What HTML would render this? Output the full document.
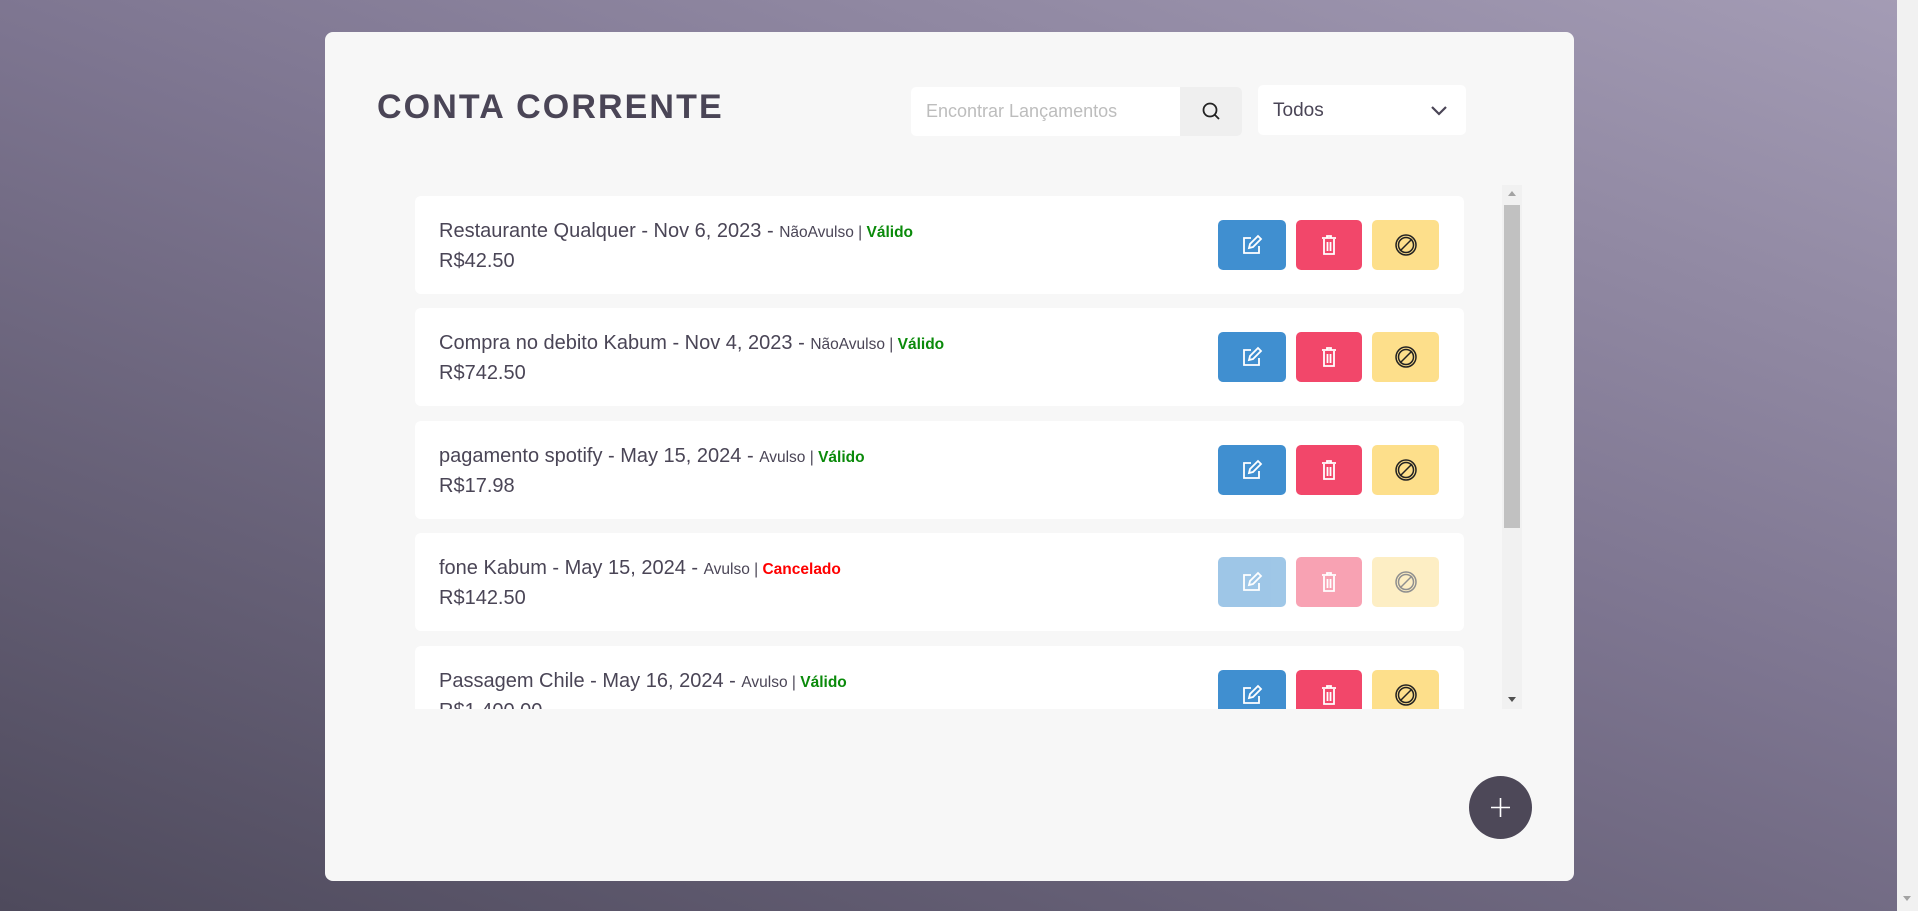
<!DOCTYPE html>
<html><head><meta charset="utf-8"><style>
*{box-sizing:border-box;margin:0;padding:0}
html,body{width:1918px;height:911px;overflow:hidden}
body{background:linear-gradient(200deg,#a49cb5 0%,#7d7590 45%,#4e4a5c 100%);font-family:"Liberation Sans",sans-serif;position:relative}
.sb{position:absolute;right:0;top:0;width:21px;height:911px;background:#f1f1f1}
.sb:after{content:"";position:absolute;left:6px;bottom:6px;border:4px solid transparent;border-top:5px solid #a3a3a3}
.panel{position:absolute;left:325px;top:32px;width:1249px;height:849px;background:#f7f7f7;border-radius:8px}
h1{position:absolute;left:52px;top:56px;font-size:34px;font-weight:bold;letter-spacing:2.1px;color:#4a4556}
.search{position:absolute;left:586px;top:55px;width:331px;height:49px;background:#fff;border-radius:5px;overflow:hidden}
.search span{position:absolute;left:15px;top:14px;font-size:18px;color:#bdbdbd}
.search .btn{position:absolute;right:0;top:0;width:62px;height:49px;background:#efefef}
.sel{position:absolute;left:933px;top:53px;width:208px;height:50px;background:#fff;border-radius:5px}
.sel span{position:absolute;left:15px;top:15px;font-size:19px;color:#4a4556}
.list{position:absolute;left:90px;top:153px;width:1107px;height:524px;overflow:hidden}
.card{position:absolute;left:0;width:1049px;height:98px;background:#fff;border-radius:6px}
.t1{position:absolute;left:24px;top:24px;font-size:20px;color:#4a4556;white-space:nowrap}
.t1 small{font-size:15.5px}
.v{color:#0a8a0a;font-weight:bold;font-size:15.5px}
.c{color:#ff0000;font-weight:bold;font-size:15.5px}
.t2{position:absolute;left:24px;top:54px;font-size:20px;color:#4a4556}
.b{position:absolute;top:24px;height:50px;border-radius:5px;display:flex;align-items:center;justify-content:center}
.b1{left:803px;width:68px;background:#408fd0}
.b2{left:881px;width:66px;background:#f2476a}
.b3{left:957px;width:67px;background:#fddf8b}
.dis .b{opacity:.5}
.track{position:absolute;left:1087px;top:0;width:20px;height:524px;background:#f1f1f1}
.thumb{position:absolute;left:1089px;top:20px;width:16px;height:323px;background:#c1c1c1}
.ua{position:absolute;left:1093px;top:6px;border:4px solid transparent;border-bottom:5px solid #a3a3a3;border-top:0}
.da{position:absolute;left:1093px;top:512px;border:4px solid transparent;border-top:5px solid #505050;border-bottom:0}
.fab{position:absolute;left:1144px;top:744px;width:63px;height:63px;border-radius:50%;background:#4d4858}
</style></head><body>
<div class="sb"></div>
<div class="panel">
<h1>CONTA CORRENTE</h1>
<div class="search"><span>Encontrar Lançamentos</span><div class="btn"><svg width="62" height="49" viewBox="0 0 62 49"><circle cx="30" cy="23" r="6.5" fill="none" stroke="#222" stroke-width="1.8"/><path d="M35 28l4 4" stroke="#222" stroke-width="1.8"/></svg></div></div>
<div class="sel"><span>Todos</span><svg style="position:absolute;left:172px;top:18px" width="18" height="14" viewBox="0 0 18 14"><path d="M2 4l7 7 7-7" fill="none" stroke="#4a4556" stroke-width="2.2"/></svg></div>
<div class="list">
<div class="card" style="top:11px"><div class="t1">Restaurante Qualquer - Nov 6, 2023 - <small>NãoAvulso | </small><span class="v">Válido</span></div><div class="t2">R$42.50</div>
<div class="b b1"><svg width="22" height="22" viewBox="0 0 22 22" fill="none" stroke="#fff" stroke-width="1.8"><path d="M10 4H3v15h15v-7"/><path d="M8 14l1-4 8-8 3 3-8 8z"/></svg></div><div class="b b2"><svg width="20" height="22" viewBox="0 0 20 22" fill="none" stroke="#fff" stroke-width="1.8"><path d="M3 4h14M8 4V2h4v2M5 5v15h10V5M8.5 8v9M11.5 8v9"/></svg></div><div class="b b3"><svg width="24" height="24" viewBox="0 0 24 24" fill="none" stroke="#222" stroke-width="1.5"><circle cx="12" cy="12" r="10"/><circle cx="12" cy="12" r="7.5"/><path d="M6 18L18 6"/></svg></div></div>
<div class="card" style="top:123px"><div class="t1">Compra no debito Kabum - Nov 4, 2023 - <small>NãoAvulso | </small><span class="v">Válido</span></div><div class="t2">R$742.50</div>
<div class="b b1"><svg width="22" height="22" viewBox="0 0 22 22" fill="none" stroke="#fff" stroke-width="1.8"><path d="M10 4H3v15h15v-7"/><path d="M8 14l1-4 8-8 3 3-8 8z"/></svg></div><div class="b b2"><svg width="20" height="22" viewBox="0 0 20 22" fill="none" stroke="#fff" stroke-width="1.8"><path d="M3 4h14M8 4V2h4v2M5 5v15h10V5M8.5 8v9M11.5 8v9"/></svg></div><div class="b b3"><svg width="24" height="24" viewBox="0 0 24 24" fill="none" stroke="#222" stroke-width="1.5"><circle cx="12" cy="12" r="10"/><circle cx="12" cy="12" r="7.5"/><path d="M6 18L18 6"/></svg></div></div>
<div class="card" style="top:236px"><div class="t1">pagamento spotify - May 15, 2024 - <small>Avulso | </small><span class="v">Válido</span></div><div class="t2">R$17.98</div>
<div class="b b1"><svg width="22" height="22" viewBox="0 0 22 22" fill="none" stroke="#fff" stroke-width="1.8"><path d="M10 4H3v15h15v-7"/><path d="M8 14l1-4 8-8 3 3-8 8z"/></svg></div><div class="b b2"><svg width="20" height="22" viewBox="0 0 20 22" fill="none" stroke="#fff" stroke-width="1.8"><path d="M3 4h14M8 4V2h4v2M5 5v15h10V5M8.5 8v9M11.5 8v9"/></svg></div><div class="b b3"><svg width="24" height="24" viewBox="0 0 24 24" fill="none" stroke="#222" stroke-width="1.5"><circle cx="12" cy="12" r="10"/><circle cx="12" cy="12" r="7.5"/><path d="M6 18L18 6"/></svg></div></div>
<div class="card dis" style="top:348px"><div class="t1">fone Kabum - May 15, 2024 - <small>Avulso | </small><span class="c">Cancelado</span></div><div class="t2">R$142.50</div>
<div class="b b1"><svg width="22" height="22" viewBox="0 0 22 22" fill="none" stroke="#fff" stroke-width="1.8"><path d="M10 4H3v15h15v-7"/><path d="M8 14l1-4 8-8 3 3-8 8z"/></svg></div><div class="b b2"><svg width="20" height="22" viewBox="0 0 20 22" fill="none" stroke="#fff" stroke-width="1.8"><path d="M3 4h14M8 4V2h4v2M5 5v15h10V5M8.5 8v9M11.5 8v9"/></svg></div><div class="b b3"><svg width="24" height="24" viewBox="0 0 24 24" fill="none" stroke="#222" stroke-width="1.5"><circle cx="12" cy="12" r="10"/><circle cx="12" cy="12" r="7.5"/><path d="M6 18L18 6"/></svg></div></div>
<div class="card" style="top:461px"><div class="t1">Passagem Chile - May 16, 2024 - <small>Avulso | </small><span class="v">Válido</span></div><div class="t2">R$1,400.00</div>
<div class="b b1"><svg width="22" height="22" viewBox="0 0 22 22" fill="none" stroke="#fff" stroke-width="1.8"><path d="M10 4H3v15h15v-7"/><path d="M8 14l1-4 8-8 3 3-8 8z"/></svg></div><div class="b b2"><svg width="20" height="22" viewBox="0 0 20 22" fill="none" stroke="#fff" stroke-width="1.8"><path d="M3 4h14M8 4V2h4v2M5 5v15h10V5M8.5 8v9M11.5 8v9"/></svg></div><div class="b b3"><svg width="24" height="24" viewBox="0 0 24 24" fill="none" stroke="#222" stroke-width="1.5"><circle cx="12" cy="12" r="10"/><circle cx="12" cy="12" r="7.5"/><path d="M6 18L18 6"/></svg></div></div>
<div class="track"></div><div class="thumb"></div><div class="ua"></div><div class="da"></div>
</div>
<div class="fab"><svg width="63" height="63" viewBox="0 0 63 63"><path d="M31.5 22v19M22 31.5h19" stroke="#fff" stroke-width="1.6"/></svg></div>
</div>
</body></html>
